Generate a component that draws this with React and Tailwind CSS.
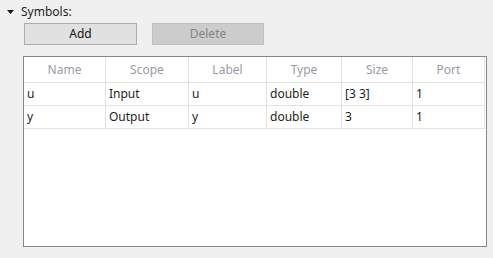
const columns = [
  { key: "name", label: "Name", w: "w-[82px]" },
  { key: "scope", label: "Scope", w: "w-[83px]" },
  { key: "label", label: "Label", w: "w-[78px]" },
  { key: "type", label: "Type", w: "w-[75px]" },
  { key: "size", label: "Size", w: "w-[71px]" },
  { key: "port", label: "Port", w: "w-[72px]" },
];

const rows = [
  { name: "u", scope: "Input", label: "u", type: "double", size: "[3 3]", port: "1" },
  { name: "y", scope: "Output", label: "y", type: "double", size: "3", port: "1" },
];

export default function App() {
  return (
    <div
      className="w-[493px] h-[258px] bg-[#f0f0f0] text-[12px] text-[#1e1e1e] overflow-hidden"
      style={{ fontFamily: '"Noto Sans", "Open Sans", sans-serif' }}
    >
      <div className="flex items-center h-[22px] pl-[7px] pt-[1px]">
        <svg width="7" height="4" viewBox="0 0 7 4" className="mr-[7px]">
          <polygon points="0,0 7,0 3.5,4" fill="#1a1a1a" />
        </svg>
        <span className="leading-none">Symbols:</span>
      </div>

      <div className="flex gap-[15px] pl-[24px] mt-[1px]">
        <button className="w-[113px] h-[22px] bg-[#e1e1e1] border border-[#adadad] leading-none text-[#111]">
          Add
        </button>
        <button className="w-[112px] h-[22px] bg-[#cccccc] border border-[#bfbfbf] leading-none text-[#838383]">
          Delete
        </button>
      </div>

      <div className="ml-[23px] mt-[11px] w-[464px] h-[191px] bg-white border border-[#828790]">
        <div className="flex h-[26px] border-b border-[#e2e2e2] w-[461px]">
          {columns.map((c) => (
            <div
              key={c.key}
              className={`${c.w} border-r border-[#e2e2e2] flex items-center justify-center text-[#9a9aa6] leading-none`}
            >
              {c.label}
            </div>
          ))}
        </div>
        {rows.map((r) => (
          <div key={r.name} className="flex h-[23px] border-b border-[#e2e2e2] w-[461px]">
            {columns.map((c) => (
              <div
                key={c.key}
                className={`${c.w} border-r border-[#e2e2e2] flex items-center pl-[3px] leading-none`}
              >
                {r[c.key]}
              </div>
            ))}
          </div>
        ))}
      </div>
    </div>
  );
}
